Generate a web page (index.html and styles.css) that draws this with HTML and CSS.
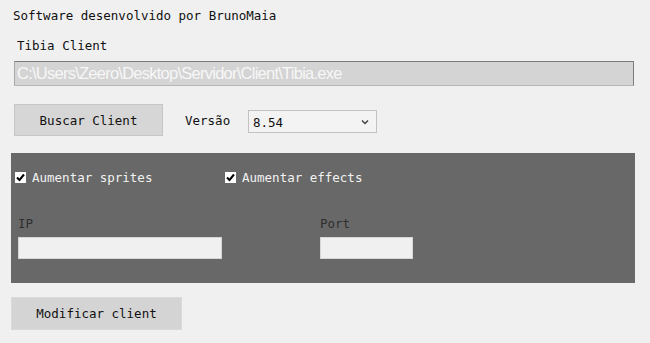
FILE: index.html
```html
<!DOCTYPE html>
<html lang="pt">
<head>
  <meta charset="UTF-8" />
  <title>Tibia Client</title>
  <link rel="stylesheet" href="styles.css">
</head>
<body>

  <div class="credit">Software desenvolvido por BrunoMaia</div>

  <div class="field-title">Tibia Client</div>
  <div class="path">C:\Users\Zeero\Desktop\Servidor\Client\Tibia.exe</div>

  <div class="row">
    <div class="btn btn-find">Buscar Client</div>
    <div class="version-label">Versão</div>
    <div class="select">
      <span>8.54</span>
      <svg width="8" height="6" viewBox="0 0 8 6"><path d="M1 1.5 L4 4.5 L7 1.5" fill="none" stroke="#444" stroke-width="1.5"/></svg>
    </div>
  </div>

  <!-- opções -->
  <div class="panel">
    <div class="checks">
      <label class="check check-sprites">
        <span class="box"><svg width="11" height="11" viewBox="0 0 11 11"><path d="M2 5.5 L4.5 8 L9 2.5" fill="none" stroke="#000" stroke-width="2"/></svg></span>
        Aumentar sprites
      </label>
      <label class="check">
        <span class="box"><svg width="11" height="11" viewBox="0 0 11 11"><path d="M2 5.5 L4.5 8 L9 2.5" fill="none" stroke="#000" stroke-width="2"/></svg></span>
        Aumentar effects
      </label>
    </div>
    <div class="fields">
      <div class="field field-ip">
        <div class="field-label">IP</div>
        <div class="input input-ip"></div>
      </div>
      <div class="field">
        <div class="field-label">Port</div>
        <div class="input input-port"></div>
      </div>
    </div>
  </div>

  <div class="btn btn-modify">Modificar client</div>

</body>
</html>
```

FILE: styles.css
```css
* { box-sizing: border-box; }
body {
  margin: 0;
  background: #f0f0f0;
  font-family: 'DejaVu Sans Mono', 'Liberation Mono', monospace;
  font-size: 12.5px;
  line-height: 15px;
  color: #111;
}
.credit {
  margin: 8px 0 0 13px;
}
.field-title {
  margin: 15px 0 0 17px;
}
.path {
  margin: 8px 16px 0 14px;
  height: 25px;
  background: #d4d4d4;
  border: 1px solid #7c7c7c;
  border-left-color: #a8a8a8;
  border-bottom-color: #b8b8b8;
  color: #f7f7f7;
  font-family: 'Liberation Sans', Arial, sans-serif;
  font-size: 16.5px;
  letter-spacing: -0.75px;
  line-height: 23px;
  padding-left: 2px;
  white-space: nowrap;
  overflow: hidden;
}
.row {
  display: flex;
  align-items: flex-start;
  margin-top: 18px;
}
.btn {
  display: flex;
  align-items: center;
  justify-content: center;
  background: #d6d6d6;
  border: 1px solid #c6c6c6;
  color: #111;
}
.btn-find {
  margin-left: 14px;
  width: 149px;
  height: 32px;
}
.version-label {
  margin: 9px 0 0 22px;
  width: 63px;
}
.select {
  margin-top: 6px;
  width: 129px;
  height: 23px;
  display: flex;
  align-items: center;
  justify-content: space-between;
  padding: 2px 7px 0 4px;
  background: #f3f3f3;
  border: 1px solid #c2c2c2;
}
.select svg { margin-top: -2px; }
.panel {
  margin: 17px 15px 0 11px;
  height: 130px;
  background: #686868;
  padding-top: 17px;
}
.checks {
  display: flex;
  padding-left: 4px;
}
.check {
  display: flex;
  align-items: center;
  gap: 6px;
  color: #f2f2f2;
}
.check-sprites { width: 210px; }
.box {
  width: 11px;
  height: 11px;
  background: #fff;
  display: flex;
}
.fields {
  display: flex;
  margin-top: 31px;
  padding-left: 7px;
}
.field-ip { width: 302px; }
.field-label {
  color: #2e2e2e;
}
.input {
  margin-top: 6px;
  height: 22px;
  background: #f0f0f0;
  border: 1px solid #d6d6d6;
}
.input-ip { width: 204px; }
.input-port { width: 93px; }
.btn-modify {
  margin: 14px 0 0 11px;
  width: 171px;
  height: 33px;
  background: #d4d4d4;
  border-color: #dadada;
}
```
